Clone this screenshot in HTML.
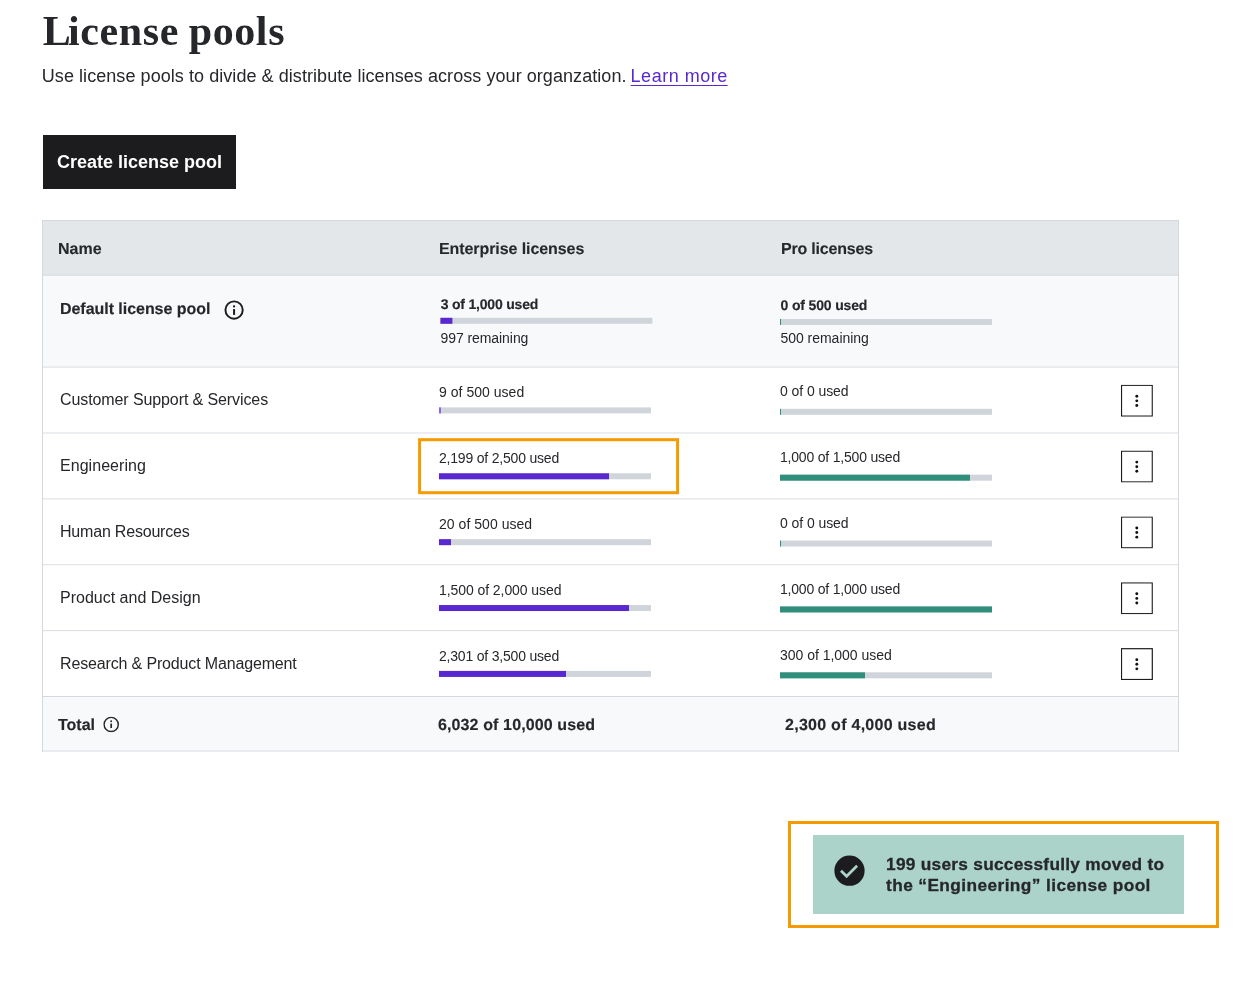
<!DOCTYPE html>
<html lang="en">
<head>
<meta charset="utf-8">
<title>License pools</title>
<style>
*{box-sizing:border-box;margin:0;padding:0}
html,body{width:1238px;height:982px;background:#fff;overflow:hidden}
body{font-family:"Liberation Sans",sans-serif;color:#26272b;position:relative}
#pg{position:absolute;left:0;top:0;width:1238px;height:982px;will-change:transform}
#pg>*{position:absolute;left:0;top:0;white-space:nowrap}
h1{font-family:"Liberation Serif",serif;font-weight:700;font-size:42px;line-height:46px;letter-spacing:0.62px;word-spacing:-1.5px;color:#26272b}
.sub{font-size:18px;line-height:22px;letter-spacing:0.06px}
.sub a{letter-spacing:0.5px;margin-left:-1px;color:#5a28d0;text-decoration:underline;text-underline-offset:3px;text-decoration-thickness:1px}
.btn{display:block;width:193px;height:54px;border:0;padding:0;margin:0;border-radius:0;background:#1c1c1f;color:#fff;font-family:inherit;font-weight:700;font-size:18px;line-height:55px;text-align:center;overflow:hidden;letter-spacing:normal}
.bg{width:1135px}
.sep{width:1135px;height:1px;background:#d9dee3}
.vb{width:1px;background:#d3d9de}
.th{font-weight:700;font-size:16px;line-height:20px;text-rendering:geometricPrecision;-webkit-text-stroke:0.1px #26272b}
.name{font-size:16px;line-height:20px}
.lbl{font-size:14px;line-height:16px;letter-spacing:-0.2px}
.b{font-weight:700;text-rendering:geometricPrecision;-webkit-text-stroke:0.15px #26272b}
.bar{width:211.6px;height:5.8px;background:#cfd5db}
.bar i{position:absolute;left:0;top:0;height:100%;display:block}
.e i{background:#5a28d0}
.p i{background:#2f8f7b}
.kebab{display:block}
.hl{border:3px solid #f59b00}
.tot{font-weight:700;font-size:16px;line-height:20px;text-rendering:geometricPrecision;-webkit-text-stroke:0.15px #26272b}
.toast{width:371.4px;height:79px;background:#abd3ca}
.toast p{position:absolute;left:73px;top:18.9px;font-weight:700;font-size:17.3px;line-height:20.9px;white-space:nowrap;color:#26272b;-webkit-text-stroke:0.3px #26272b}
</style>
</head>
<body>
<div id="pg">
<h1 style="transform:translate(42.8px,8.2px)"><span style="letter-spacing:-2.8px">L</span>icense pools</h1>
<p class="sub" style="transform:translate(41.8px,65px)">Use license pools to divide &amp; distribute licenses across your organzation. <a href="#">Learn more</a></p>
<button type="button" class="btn" style="transform:translate(43px,135px)">Create license pool</button>
<div class="bg" style="transform:translate(43px,220.5px);height:54.5px;background:#e3e7ea"></div>
<div class="bg" style="transform:translate(43px,275px);height:92.1px;background:#f7f9fb"></div>
<div class="bg" style="transform:translate(43px,696.5px);height:54.5px;background:#f7f9fb"></div>
<div class="sep" style="transform:translate(43px,220px);background:#d3d9de"></div>
<div class="sep" style="transform:translate(43px,274.7px);background:#d3d9de"></div>
<div class="sep" style="transform:translate(43px,366.6px)"></div>
<div class="sep" style="transform:translate(43px,432.48px)"></div>
<div class="sep" style="transform:translate(43px,498.36px)"></div>
<div class="sep" style="transform:translate(43px,564.24px)"></div>
<div class="sep" style="transform:translate(43px,630.12px)"></div>
<div class="sep" style="transform:translate(43px,696px);background:#d3d9de"></div>
<div class="sep" style="transform:translate(43px,750.5px);background:#d9dee3"></div>
<div class="vb" style="transform:translate(42px,220px);height:531.5px"></div>
<div class="vb" style="transform:translate(1178px,220px);height:531.5px"></div>
<div class="th" style="transform:translate(58px,240px)">Name</div>
<div class="th" style="transform:translate(439px,240px);letter-spacing:-0.08px">Enterprise licenses</div>
<div class="th" style="transform:translate(781px,240px);letter-spacing:-0.2px">Pro licenses</div>
<div class="name b" style="transform:translate(60px,299.8px);letter-spacing:-0.04px">Default license pool</div>
<svg style="transform:translate(224.08px,300px)" width="20" height="20" viewBox="0 0 20 20"><circle cx="10" cy="10" r="8.65" fill="none" stroke="#1c1c1f" stroke-width="1.95"/><circle cx="10" cy="6.4" r="1.15" fill="#1c1c1f"/><rect x="9" y="9.05" width="2" height="5.85" fill="#1c1c1f"/></svg>
<div class="lbl b" style="transform:translate(440.7px,296.2px)">3 of 1,000 used</div>
<div class="bar e" style="transform:translate(440.4px,317.8px)"><i style="width:12px"></i></div>
<div class="lbl" style="transform:translate(440.5px,330px);letter-spacing:-0.07px">997 remaining</div>
<div class="lbl b" style="transform:translate(780.5px,297.3px);letter-spacing:-0.15px">0 of 500 used</div>
<div class="bar p" style="transform:translate(780px,319px)"><i style="width:1px"></i></div>
<div class="lbl" style="transform:translate(780.4px,330px);letter-spacing:-0.02px">500 remaining</div>
<div class="name" style="transform:translate(60px,390.4px);letter-spacing:-0.1px">Customer Support &amp; Services</div>
<div class="lbl" style="transform:translate(439px,384.1px);letter-spacing:0.03px">9 of 500 used</div>
<div class="bar e" style="transform:translate(439px,407.4px)"><i style="width:2px;background:#8a66e0"></i></div>
<div class="lbl" style="transform:translate(780px,383.1px);letter-spacing:-0.07px">0 of 0 used</div>
<div class="bar p" style="transform:translate(780px,408.8px)"><i style="width:1px"></i></div>
<svg class="kebab" style="transform:translate(1120.9px,384.7px)" width="32" height="32" viewBox="0 0 32 32"><rect x="0.6" y="0.6" width="30.8" height="30.8" fill="#fff" stroke="#1c1c1f" stroke-width="1.2"/><circle cx="15.9" cy="11.55" r="1.45" fill="#111"/><circle cx="15.9" cy="16.15" r="1.45" fill="#111"/><circle cx="15.9" cy="20.75" r="1.45" fill="#111"/></svg>
<div class="name" style="transform:translate(60px,456.28px);letter-spacing:0.05px">Engineering</div>
<div class="lbl" style="transform:translate(439px,449.98px);letter-spacing:-0.2px">2,199 of 2,500 used</div>
<div class="bar e" style="transform:translate(439px,473.28px)"><i style="width:169.5px"></i></div>
<div class="lbl" style="transform:translate(780px,448.98px);letter-spacing:-0.2px">1,000 of 1,500 used</div>
<div class="bar p" style="transform:translate(780px,474.68px)"><i style="width:190px"></i></div>
<svg class="kebab" style="transform:translate(1120.9px,450.55px)" width="32" height="32" viewBox="0 0 32 32"><rect x="0.6" y="0.6" width="30.8" height="30.8" fill="#fff" stroke="#1c1c1f" stroke-width="1.2"/><circle cx="15.9" cy="11.55" r="1.45" fill="#111"/><circle cx="15.9" cy="16.15" r="1.45" fill="#111"/><circle cx="15.9" cy="20.75" r="1.45" fill="#111"/></svg>
<div class="name" style="transform:translate(60px,522.16px);letter-spacing:-0.2px">Human Resources</div>
<div class="lbl" style="transform:translate(439px,515.86px);letter-spacing:0.04px">20 of 500 used</div>
<div class="bar e" style="transform:translate(439px,539.16px)"><i style="width:12px"></i></div>
<div class="lbl" style="transform:translate(780px,514.86px);letter-spacing:-0.07px">0 of 0 used</div>
<div class="bar p" style="transform:translate(780px,540.56px)"><i style="width:1px"></i></div>
<svg class="kebab" style="transform:translate(1120.9px,516.4px)" width="32" height="32" viewBox="0 0 32 32"><rect x="0.6" y="0.6" width="30.8" height="30.8" fill="#fff" stroke="#1c1c1f" stroke-width="1.2"/><circle cx="15.9" cy="11.55" r="1.45" fill="#111"/><circle cx="15.9" cy="16.15" r="1.45" fill="#111"/><circle cx="15.9" cy="20.75" r="1.45" fill="#111"/></svg>
<div class="name" style="transform:translate(60px,588.04px);letter-spacing:0.0px">Product and Design</div>
<div class="lbl" style="transform:translate(439px,581.74px);letter-spacing:-0.07px">1,500 of 2,000 used</div>
<div class="bar e" style="transform:translate(439px,605.04px)"><i style="width:190px"></i></div>
<div class="lbl" style="transform:translate(780px,580.74px);letter-spacing:-0.2px">1,000 of 1,000 used</div>
<div class="bar p" style="transform:translate(780px,606.44px)"><i style="width:212px"></i></div>
<svg class="kebab" style="transform:translate(1120.9px,582.25px)" width="32" height="32" viewBox="0 0 32 32"><rect x="0.6" y="0.6" width="30.8" height="30.8" fill="#fff" stroke="#1c1c1f" stroke-width="1.2"/><circle cx="15.9" cy="11.55" r="1.45" fill="#111"/><circle cx="15.9" cy="16.15" r="1.45" fill="#111"/><circle cx="15.9" cy="20.75" r="1.45" fill="#111"/></svg>
<div class="name" style="transform:translate(60px,653.92px);letter-spacing:-0.15px">Research &amp; Product Management</div>
<div class="lbl" style="transform:translate(439px,647.62px);letter-spacing:-0.2px">2,301 of 3,500 used</div>
<div class="bar e" style="transform:translate(439px,670.92px)"><i style="width:127px"></i></div>
<div class="lbl" style="transform:translate(780px,646.62px);letter-spacing:-0.02px">300 of 1,000 used</div>
<div class="bar p" style="transform:translate(780px,672.32px)"><i style="width:85px"></i></div>
<svg class="kebab" style="transform:translate(1120.9px,648.1px)" width="32" height="32" viewBox="0 0 32 32"><rect x="0.6" y="0.6" width="30.8" height="30.8" fill="#fff" stroke="#1c1c1f" stroke-width="1.2"/><circle cx="15.9" cy="11.55" r="1.45" fill="#111"/><circle cx="15.9" cy="16.15" r="1.45" fill="#111"/><circle cx="15.9" cy="20.75" r="1.45" fill="#111"/></svg>
<div class="tot" style="transform:translate(58px,716px)">Total</div>
<svg style="transform:translate(103.18px,716.45px)" width="16" height="16" viewBox="0 0 16 16"><circle cx="8" cy="8" r="7.1" fill="none" stroke="#26272b" stroke-width="1.45"/><circle cx="8" cy="4.85" r="0.95" fill="#26272b"/><rect x="7.15" y="7.1" width="1.7" height="4.45" fill="#26272b"/></svg>
<div class="tot" style="transform:translate(438px,716px);letter-spacing:0.12px">6,032 of 10,000 used</div>
<div class="tot" style="transform:translate(785px,716px);letter-spacing:0.27px">2,300 of 4,000 used</div>
<div class="hl" style="transform:translate(418.1px,438.2px);width:260.7px;height:55.5px"></div>
<div class="hl" style="transform:translate(788px,821px);width:431px;height:107px"></div>
<div class="toast" style="transform:translate(813px,835px)">
 <svg style="position:absolute;left:20px;top:19px" width="33" height="33" viewBox="0 0 33 33"><circle cx="16.5" cy="16.7" r="15.1" fill="#1c1c1f"/><path d="M8 16.7 L13.6 22.3 L24.1 11.8" fill="none" stroke="#abd3ca" stroke-width="2.7"/></svg>
 <p><span style="letter-spacing:0.27px">199 users successfully moved to</span><br><span style="letter-spacing:0.41px">the “Engineering” license pool</span></p>
</div>
</div>
</body>
</html>
